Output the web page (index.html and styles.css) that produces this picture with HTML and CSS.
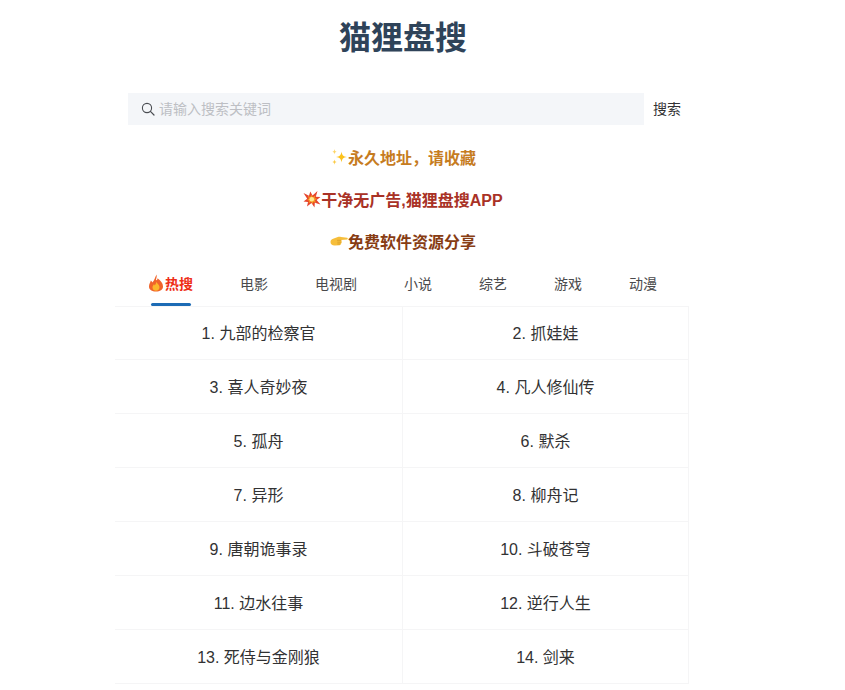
FILE: index.html
```html
<!DOCTYPE html>
<html lang="zh-CN">
<head>
<meta charset="utf-8">
<title>猫狸盘搜</title>
<link rel="stylesheet" href="styles.css">
</head>
<body>
<main class="page">
  <h1 class="title">猫狸盘搜</h1>
  <form class="search">
    <div class="search-field">
      <svg class="search-icon" viewBox="0 0 14 14" width="14" height="14"><circle cx="6" cy="6" r="4.6" fill="none" stroke="#4a4d52" stroke-width="1.1"/><path d="M9.4 9.4 13 13" stroke="#4a4d52" stroke-width="1.2" stroke-linecap="round"/></svg>
      <span class="placeholder">请输入搜索关键词</span>
    </div>
    <span class="search-btn">搜索</span>
  </form>
  <section class="notices">
    <p class="notice notice-gold"><svg class="emoji" viewBox="0 0 18 18" width="18" height="18"><path d="M11.500 3.500c.5 3.600 1.700 5 5.500 5.500-3.800.6-5 1.900-5.500 5.500-.5-3.600-1.700-4.900-5.500-5.500 3.800-.5 5-1.900 5.500-5.500z" fill="#fcc21b"/><path d="M4.500 1c.3 1.900 .8 2.400 2.300 2.700-1.500.3-2 .8-2.300 2.700-.3-1.900-.8-2.400-2.300-2.700 1.500-.3 2-.8 2.300-2.700z" fill="#fdd567"/><path d="M4.500 11.500c.3 1.800 .8 2.300 2.300 2.600-1.500.3-2 .8-2.300 2.600-.3-1.800-.8-2.300-2.300-2.600 1.500-.3 2-.8 2.300-2.600z" fill="#fbcb47"/></svg>永久地址，请收藏</p>
    <p class="notice notice-red"><svg class="emoji" viewBox="0 0 18 18" width="18" height="18"><path d="M.5 3 6 5.800 7.300 1.500 9.500 5.500 14.500 1 12.800 6.800 17.500 7 13.600 10 17.500 14.500 11.800 12.700 11.500 17.500 8.500 13 4 16.500 5 12 .5 11.500 4.200 8.800z" fill="#e5432d"/><path d="M4.500 5.500 7.300 7.300 8.300 4.500 9.800 7.200 12.500 5.200 11.700 8 14 8.700 11.900 10.300 13 13 10.500 11.700 9.500 14.300 8.200 11.800 5.500 13.200 6.200 10.700 3.800 10 6 8.600z" fill="#f7941e"/><circle cx="8.800" cy="9.200" r="2.300" fill="#fee88f"/></svg>干净无广告,猫狸盘搜APP</p>
    <p class="notice notice-brown"><svg class="emoji" viewBox="0 0 18 18" width="18" height="18"><path d="M.5 10c0-1.600 1-2.700 2.600-3.200L7.800 5c1-.3 2.200-.2 3.300 0l6 .8c.9.2.9 1.500 0 1.600l-5.800.5c.5.500.6 1.300.2 1.900.4.700.2 1.400-.5 1.800.1.900-.5 1.500-1.400 1.600l-4.500.3C2.200 13.700.5 12.200.5 10z" fill="#f6be3b"/><path d="M7 8.300h4M7.300 10.200h3.600M7.300 12h2.800" stroke="#cf9223" stroke-width=".6" fill="none"/></svg>免费软件资源分享</p>
  </section>
  <nav class="tabs">
    <a class="tab tab-active"><svg class="emoji" viewBox="0 0 18 18" width="18" height="18"><path d="M9.500.5c.8 3-.8 4.200-.5 5.800 1 .2 1.500-.8 1.500-2 3 2 5.500 5 5.500 8.200 0 3.200-3 5-7 5s-7-1.800-7-5c0-2.500 1.400-3.900 1.800-6 .9.500 1.300 1.200 1.400 2.100C7.300 6.700 8 3.500 9.500.5z" fill="#f0642a"/><path d="M9.300 7.500c.3 1.900 3.200 3 3.200 5.700 0 2.200-1.500 3.500-3.500 3.500s-3.500-1.300-3.500-3.300c0-1.400.9-2.200 1.400-3.200.5.300.8.700.9 1.300.9-1.100 1.500-2.700 1.500-4z" fill="#fcb62b"/></svg>热搜</a>
    <a class="tab">电影</a>
    <a class="tab">电视剧</a>
    <a class="tab">小说</a>
    <a class="tab">综艺</a>
    <a class="tab">游戏</a>
    <a class="tab">动漫</a>
  </nav>
  <ol class="grid">
    <li class="cell">1. 九部的检察官</li>
    <li class="cell">2. 抓娃娃</li>
    <li class="cell">3. 喜人奇妙夜</li>
    <li class="cell">4. 凡人修仙传</li>
    <li class="cell">5. 孤舟</li>
    <li class="cell">6. 默杀</li>
    <li class="cell">7. 异形</li>
    <li class="cell">8. 柳舟记</li>
    <li class="cell">9. 唐朝诡事录</li>
    <li class="cell">10. 斗破苍穹</li>
    <li class="cell">11. 边水往事</li>
    <li class="cell">12. 逆行人生</li>
    <li class="cell">13. 死侍与金刚狼</li>
    <li class="cell">14. 剑来</li>
  </ol>
</main>
</body>
</html>
```

FILE: styles.css
```css
* { box-sizing: border-box; }
html, body { margin: 0; padding: 0; background: #fff; }
body {
  font-family: "Liberation Sans", "Noto Sans CJK SC", sans-serif;
  color: #323233;
  overflow: hidden;
  height: 690px;
}
.page { width: 576px; margin-left: 115px; }
.title {
  margin: 0;
  height: 93px;
  padding-top: 14px;
  text-align: center;
  font-size: 32px;
  line-height: 48px;
  font-weight: 700;
  color: #2f4359;
}
.search { display: flex; align-items: center; height: 32px; padding-left: 13px; }
.search-field {
  width: 516px;
  height: 32px;
  display: flex;
  align-items: center;
  gap: 5px;
  padding-left: 13px;
  background: #f4f6f9;
}
.search-icon { flex: none; }
.placeholder { margin-left: -1px; padding-bottom: 2px; font-size: 14px; color: #bdbfc4; }
.search-btn { margin-left: 9px; padding-bottom: 2px; font-size: 14px; color: #323233; }
.notices { padding-top: 11px; }
.notice {
  margin: 0;
  height: 42px;
  display: flex;
  align-items: center;
  justify-content: center;
  font-size: 16px;
  font-weight: 700;
}
.emoji { flex: none; }
.notice-gold { color: #c67c1f; }
.notice-red { color: #a93226; }
.notice-brown { color: #873c13; }
.tabs {
  display: flex;
  gap: 47px;
  width: 574px;
  height: 46px;
  padding-left: 32px;
  margin-top: -1px;
  border-bottom: 1px solid #f5f5f6;
}
.tab {
  position: relative;
  display: flex;
  align-items: center;
  height: 45px;
  padding-bottom: 2px;
  font-size: 14px;
  color: #4a4a4c;
}
.tab-active { color: #ee2e16; font-weight: 700; }
.tab-active::after {
  content: "";
  position: absolute;
  left: 4px;
  bottom: 0;
  width: 40px;
  height: 3px;
  border-radius: 2px;
  background: #1c6bb5;
}
.grid {
  list-style: none;
  margin: 0;
  padding: 0;
  width: 574px;
  display: grid;
  grid-template-columns: 288px 286px;
}
.cell {
  height: 54px;
  padding-bottom: 2px;
  display: flex;
  align-items: center;
  justify-content: center;
  font-size: 16px;
  color: #323233;
  border-bottom: 1px solid #f5f5f6;
  border-right: 1px solid #f5f5f6;
}
.cell:nth-child(-n+2) { height: 53px; }
```
